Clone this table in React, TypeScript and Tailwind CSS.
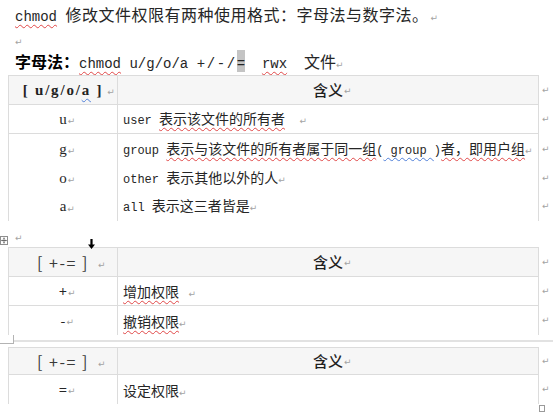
import type { ReactNode } from 'react'
import clsx from 'clsx'

// Word-style document page: chmod notes with three tables

const red = 'underline decoration-wavy decoration-[#e04848] decoration-1 underline-offset-[3px]'
const blue = 'underline decoration-wavy decoration-[#4f7fd8] decoration-1 underline-offset-[3px]'

function Mark({ className }: { className?: string }) {
  return (
    <span className={clsx("font-['DejaVu_Sans',sans-serif] text-[9px] leading-none text-[#a3a3a3]", className)}>
      ↵
    </span>
  )
}

function En({ children, className }: { children: ReactNode; className?: string }) {
  return <span className={clsx("font-['Liberation_Mono',monospace]", className)}>{children}</span>
}

// centered cell text, paragraph mark hangs after it
function C({ children, markClass }: { children: ReactNode; markClass?: string }) {
  return (
    <span className="relative">
      {children}
      <Mark className={clsx('absolute bottom-[4px] left-full', markClass ?? 'ml-[1px]')} />
    </span>
  )
}

function Row({
  h,
  head,
  top,
  bottom,
  left,
  right,
  center,
}: {
  h: string
  head?: boolean
  top?: boolean
  bottom?: boolean
  left: ReactNode
  right: ReactNode
  center?: boolean
}) {
  return (
    <div className={clsx('flex', h)}>
      <div
        className={clsx(
          'ml-[8px] flex w-[531px] border-x border-[#dcdcdc]',
          head ? 'bg-[#f6f6f6]' : 'bg-white',
          top && 'border-t',
          bottom && 'border-b'
        )}
      >
        <div className="flex w-[109px] items-center justify-center border-r border-[#dcdcdc]">{left}</div>
        <div
          className={clsx(
            'flex min-w-0 flex-1 items-center whitespace-pre',
            center ? 'justify-center' : 'pl-[5px]'
          )}
        >
          <div className="leading-[20px]">{right}</div>
        </div>
      </div>
      <div className="flex items-center pl-[3px]">
        <Mark />
      </div>
    </div>
  )
}

const headRight = (
  <C>
    <span className="text-[15px] font-medium text-[#1f1f1f]">含义</span>
  </C>
)

const opsHead = (
  <C markClass="ml-[9px]">
    <span className="text-[16px] tracking-[1.5px] text-[#3a3a3a]">[ +-= ]</span>
  </C>
)

function MoveHandle() {
  return (
    <svg width="8" height="9" viewBox="0 0 8 9">
      <rect x="0.5" y="0.5" width="7" height="8" fill="#fff" stroke="#8f8f8f" />
      <path d="M4 1.8v5.4M1.6 4.5h4.8" stroke="#555" strokeWidth="0.8" />
      <path d="M4 1.4l-1 1.1h2zM4 7.6l-1-1.1h2zM1.2 4.5l1.1-1v2zM6.8 4.5l-1.1-1v2z" fill="#555" />
    </svg>
  )
}

function DownArrow({ className }: { className?: string }) {
  return (
    <svg className={className} width="7" height="10" viewBox="0 0 7 10">
      <path d="M2.4 0h2.2v5.6H7L3.5 10 0 5.6h2.4z" fill="#000" />
    </svg>
  )
}

export default function App() {
  return (
    <div className="relative h-[417px] w-[553px] overflow-hidden bg-white font-['Noto_Sans_CJK_SC',sans-serif] text-[#262626]">
      {/* intro line */}
      <div className="h-[28px] whitespace-pre pl-[15px] text-[16px] leading-[28px]">
        <En className={clsx('text-[14px]', red)}>chmod</En>
        <En className="text-[14px]"> </En>
        <span className="tracking-[0.5px]">修改文件权限有两种使用格式：字母法与数字法。</span>
        <Mark className="ml-[2px]" />
      </div>

      <div className="h-[20px] pl-[15px] leading-[20px]">
        <Mark />
      </div>

      {/* syntax line */}
      <div className="h-[27px] whitespace-pre pl-[15px] text-[16px] leading-[26px]">
        <span className="font-bold text-black">字母法：</span>
        <En className={clsx('text-[14px]', red)}>chmod</En>
        <En className="text-[14px]"> u/g/o/a </En>
        <En className="text-[14px] tracking-[1.6px]">+/-/</En>
        <span className="inline-block h-[22px] bg-[#c4c4c4] leading-[22px]">
          <En className="text-[14px]">=</En>
        </span>
        <En className="text-[14px]">  </En>
        <En className={clsx('text-[14px]', red)}>rwx</En>
        <En className="text-[14px]">  </En>
        文件
        <Mark />
      </div>

      {/* table 1: u/g/o/a */}
      <div className="text-[14px]">
        <Row
          h="h-[30px]"
          head
          top
          bottom
          center
          left={
            <C markClass="ml-[4px]">
              <span className="font-['Liberation_Serif',serif] text-[15px] font-bold tracking-[1.8px] text-[#222]">
                [ u/g/o/<span className={blue}>a</span> ]
              </span>
            </C>
          }
          right={headRight}
        />
        <Row
          h="h-[29px]"
          bottom
          left={
            <C>
              <span className="font-['Liberation_Serif',serif] text-[15px]">u</span>
            </C>
          }
          right={
            <>
              <En className="text-[12px]">user </En>
              <span className={red}>表示该文件的所有者</span>
              <En className="text-[12px]">  </En>
              <Mark />
            </>
          }
        />
        <Row
          h="h-[30px]"
          left={
            <C>
              <span className="font-['Liberation_Serif',serif] text-[15px]">g</span>
            </C>
          }
          right={
            <>
              <En className="text-[12px]">group </En>
              <span className={red}>表示与该文件的所有者属于同一组</span>
              <En className="text-[12px]">(</En>
              <En className={clsx('text-[12px]', blue)}> group </En>
              <En className="text-[12px]">)</En>
              <span className={red}>者，即用户组</span>
              <Mark />
            </>
          }
        />
        <Row
          h="h-[28px]"
          left={
            <C>
              <span className="font-['Liberation_Serif',serif] text-[15px]">o</span>
            </C>
          }
          right={
            <>
              <En className="text-[12px]">other </En>
              表示其他以外的人
              <Mark />
            </>
          }
        />
        <Row
          h="h-[29px]"
          left={
            <C>
              <span className="font-['Liberation_Serif',serif] text-[15px]">a</span>
            </C>
          }
          right={
            <>
              <En className="text-[12px]">all </En>
              表示这三者皆是
              <Mark />
            </>
          }
        />
      </div>

      {/* empty paragraph with table handle and column cursor */}
      <div className="relative flex h-[26px] items-end pb-[2px]">
        <MoveHandle />
        <Mark className="mb-[2px] ml-[7px]" />
        <DownArrow className="absolute left-[88px] top-[18px]" />
      </div>

      {/* table 2: + - */}
      <div className="text-[14px]">
        <Row h="h-[30px]" head top bottom center left={opsHead} right={headRight} />
        <Row
          h="h-[29px]"
          bottom
          left={<C>+</C>}
          right={
            <>
              <span className={red}>增加权限</span>
              {'   '}
              <Mark />
            </>
          }
        />
        <Row
          h="h-[29px]"
          left={<C>-</C>}
          right={
            <>
              <span className={red}>撤销权限</span>
              <Mark />
            </>
          }
        />
      </div>

      {/* page separator */}
      <div className="flex h-[12px]">
        <div className="h-[9px] w-[14px] border-b border-r border-[#b3b3b3]" />
        <div className="mt-[5px] h-[2px] flex-1 bg-[#e2e2e2]" />
      </div>

      {/* table 3: = */}
      <div className="text-[14px]">
        <Row h="h-[28px]" head top bottom center left={opsHead} right={headRight} />
        <Row
          h="h-[29px]"
          left={<C>=</C>}
          right={
            <>
              设定权限
              <Mark />
            </>
          }
        />
      </div>

      <div className="flex h-[13px]">
        <div className="ml-[539px] mt-px h-[7px] w-[6px] border border-[#9a9a9a]" />
      </div>
    </div>
  )
}
